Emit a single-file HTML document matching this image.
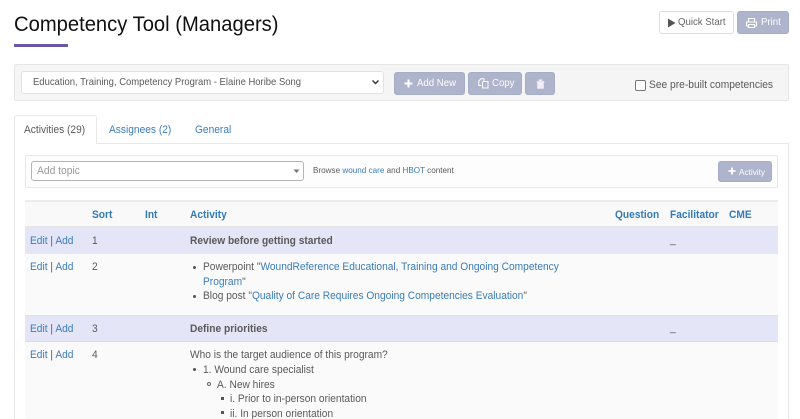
<!DOCTYPE html>
<html><head><meta charset="utf-8"><style>
html,body{margin:0;padding:0;background:#fff;width:800px;height:419px;overflow:hidden}
body{font-family:"Liberation Sans",sans-serif;color:#5a5a5a;position:relative}
#w{position:absolute;left:0;top:0;width:800px;height:419px;overflow:hidden;filter:blur(.25px)}
.a{position:absolute;white-space:nowrap}
.t,.th,.s,.x{transform:scaleX(.944);transform-origin:0 0}
.t{position:absolute;white-space:nowrap;font-size:10.8px;line-height:14px}
.s{position:absolute;white-space:nowrap}
.x{display:inline-block}
a,.l{color:#3a7cb8;text-decoration:none}
.b{position:absolute;box-sizing:border-box;background:#adb4cc;border:1px solid #a5adc7;border-radius:3px;color:#fff;font-size:10.2px;line-height:22px;white-space:nowrap}
.th{font-weight:bold;color:#337ab7;font-size:10.8px;line-height:14px;position:absolute;white-space:nowrap}
.bu{position:absolute;width:3.4px;height:3.4px;background:#555;border-radius:50%}
</style></head><body><div id="w">
<div class="s" style="left:14px;top:8.5px;font-size:21.4px;line-height:30px;color:#111">Competency Tool (Managers)</div>
<div class="a" style="left:13.5px;top:44px;width:54.5px;height:3px;background:#6b57a5"></div>

<div class="b" style="left:659px;top:11px;width:75px;height:23px;background:#fff;border-color:#ddd;color:#666"><svg style="position:absolute;left:7px;top:6px" width="9" height="10"><path d="M1 0.5L8.5 5L1 9.5Z" fill="#555"/></svg><span class="s" style="left:18px;top:0">Quick Start</span></div>
<div class="b" style="left:737px;top:11px;width:52px;height:23px"><svg style="position:absolute;left:8px;top:6px" width="11" height="10"><path d="M2.5 3.5V.5H8.5V3.5M2.5 8H.5V4H10.5V8H8.5M2.5 6.5H8.5V9.5H2.5Z" fill="none" stroke="#fff" stroke-width="1.1"/></svg><span class="s" style="left:23px;top:0">Print</span></div>

<div class="a" style="left:13.5px;top:64px;width:775px;height:37px;box-sizing:border-box;background:#f5f5f5;border:1px solid #e6e6e6;border-radius:2px"></div>
<div class="a" style="left:20.5px;top:71px;width:363.5px;height:23px;box-sizing:border-box;background:#fff;border:1px solid #e2e2e2;border-radius:3px"><span class="s" style="left:11px;top:0;font-size:10.03px;line-height:22px;color:#5a5a5a">Education, Training, Competency Program - Elaine Horibe Song</span><svg style="position:absolute;left:349px;top:7px" width="9" height="7"><path d="M1.5 1.5L4.5 4.5L7.5 1.5" fill="none" stroke="#333" stroke-width="1.4"/></svg></div>
<div class="b" style="left:394px;top:71.5px;width:70.5px;height:23px"><svg style="position:absolute;left:9px;top:6px" width="9" height="9"><path d="M4.5 .5V8.5M.5 4.5H8.5" stroke="#fff" stroke-width="2"/></svg><span class="s" style="left:22px;top:0">Add New</span></div>
<div class="b" style="left:467.5px;top:71.5px;width:54.5px;height:23px"><svg style="position:absolute;left:9px;top:5px" width="11" height="11"><path d="M3.5 7.5H.8V3L3 .8H6V3M5 3.5H10V10H4.5V5Z" fill="none" stroke="#fff" stroke-width="1"/></svg><span class="s" style="left:23px;top:0">Copy</span></div>
<div class="b" style="left:525px;top:71.5px;width:30px;height:23px"><svg style="position:absolute;left:10px;top:6px" width="9" height="10"><path d="M1 2.5H8V3.5H7.5V9.5H1.5V3.5H1ZM3 2V.8H6V2" fill="#f4ecf8" stroke="#f4ecf8" stroke-width=".6"/></svg></div>
<div class="a" style="left:634.5px;top:80px;width:11px;height:11px;box-sizing:border-box;background:#fff;border:1px solid #777;border-radius:2px"></div>
<div class="s" style="left:648.5px;top:78px;font-size:10.85px;line-height:14px;color:#5a5a5a">See pre-built competencies</div>

<div class="a" style="left:13.5px;top:143px;width:775.5px;height:290px;box-sizing:border-box;border:1px solid #e8e8e8"></div>
<div class="a" style="left:13.5px;top:115px;width:83.5px;height:29px;box-sizing:border-box;background:#fff;border:1px solid #e8e8e8;border-bottom:none;border-radius:3px 3px 0 0"></div>
<div class="t" style="left:24px;top:123px">Activities (29)</div>
<div class="t l" style="left:108.5px;top:123px">Assignees (2)</div>
<div class="t l" style="left:194.5px;top:123px">General</div>

<div class="a" style="left:24.5px;top:154.5px;width:753.5px;height:33px;box-sizing:border-box;background:#fdfdfd;border:1px solid #e8e8e8;border-radius:2px"></div>
<div class="a" style="left:31px;top:161px;width:272.5px;height:20px;box-sizing:border-box;background:#fff;border:1px solid #b4b4b4;border-radius:3px;color:#999"><span class="s" style="left:5px;top:0;font-size:10.9px;line-height:19px">Add topic</span><svg style="position:absolute;left:261px;top:7px" width="7" height="5"><path d="M.5 .5H6.5L3.5 4Z" fill="#777"/></svg></div>
<div class="s" style="left:313px;top:164px;font-size:8.62px;line-height:13px;color:#5a5a5a">Browse <span class="l">wound care</span> and <span class="l">HBOT</span> content</div>
<div class="b" style="left:717.5px;top:161px;width:54.5px;height:21px;font-size:8.7px;line-height:20px"><svg style="position:absolute;left:9px;top:5px" width="8" height="8"><path d="M4 .5V7.5M.5 4H7.5" stroke="#fff" stroke-width="1.8"/></svg><span class="s" style="left:20px;top:0">Activity</span></div>

<div class="a" style="left:24.5px;top:200px;width:753.5px;height:27px;box-sizing:border-box;background:#f9f9f9;border-top:2px solid #ececec;border-bottom:1px solid #e6e6e6"></div>
<div class="a" style="left:24.5px;top:227px;width:753.5px;height:27px;background:#e4e5f7"></div>
<div class="a" style="left:24.5px;top:254px;width:753.5px;height:61px;background:#fafafa"></div>
<div class="a" style="left:24.5px;top:315px;width:753.5px;height:27px;box-sizing:border-box;background:#e4e5f7;border-top:1px solid #e0e0ea;border-bottom:1px solid #dcdce8"></div>
<div class="a" style="left:24.5px;top:342px;width:753.5px;height:77px;background:#fafafa"></div>

<div class="th" style="left:91.5px;top:208px">Sort</div>
<div class="th" style="left:145px;top:208px">Int</div>
<div class="th" style="left:189.5px;top:208px">Activity</div>
<div class="th" style="left:614.5px;top:208px">Question</div>
<div class="th" style="left:669.5px;top:208px">Facilitator</div>
<div class="th" style="left:729px;top:208px">CME</div>

<div class="t" style="left:30px;top:234px"><a>Edit</a> | <a>Add</a></div>
<div class="t" style="left:91.5px;top:234px">1</div>
<div class="t" style="left:189.5px;top:234px;font-weight:bold">Review before getting started</div>
<div class="t" style="left:669.5px;top:233px">_</div>

<div class="t" style="left:30px;top:260px"><a>Edit</a> | <a>Add</a></div>
<div class="t" style="left:91.5px;top:260px">2</div>
<div class="bu" style="left:192.5px;top:265.5px"></div>
<div class="t" style="left:203px;top:260px">Powerpoint "<a>WoundReference Educational, Training and Ongoing Competency</a></div>
<div class="t l" style="left:203px;top:275px">Program<span style="color:#5a5a5a">"</span></div>
<div class="bu" style="left:192.5px;top:294.5px"></div>
<div class="t" style="left:203px;top:289px">Blog post "<a>Quality of Care Requires Ongoing Competencies Evaluation</a>"</div>

<div class="t" style="left:30px;top:322px"><a>Edit</a> | <a>Add</a></div>
<div class="t" style="left:91.5px;top:322px">3</div>
<div class="t" style="left:189.5px;top:322px;font-weight:bold">Define priorities</div>
<div class="t" style="left:669.5px;top:321px">_</div>

<div class="t" style="left:30px;top:348px"><a>Edit</a> | <a>Add</a></div>
<div class="t" style="left:91.5px;top:348px">4</div>
<div class="t" style="left:189.5px;top:348px">Who is the target audience of this program?</div>
<div class="bu" style="left:192.5px;top:367.5px"></div>
<div class="t" style="left:203px;top:362.5px">1. Wound care specialist</div>
<div class="bu" style="left:206.5px;top:382px;width:4px;height:4px;box-sizing:border-box;border:.8px solid #666;background:none"></div>
<div class="t" style="left:216.5px;top:377.5px">A. New hires</div>
<div class="bu" style="left:220.5px;top:396.5px;border-radius:0"></div>
<div class="t" style="left:230px;top:391.5px">i. Prior to in-person orientation</div>
<div class="bu" style="left:220.5px;top:411px;border-radius:0"></div>
<div class="t" style="left:230px;top:406.5px">ii. In person orientation</div>
</div></body></html>
